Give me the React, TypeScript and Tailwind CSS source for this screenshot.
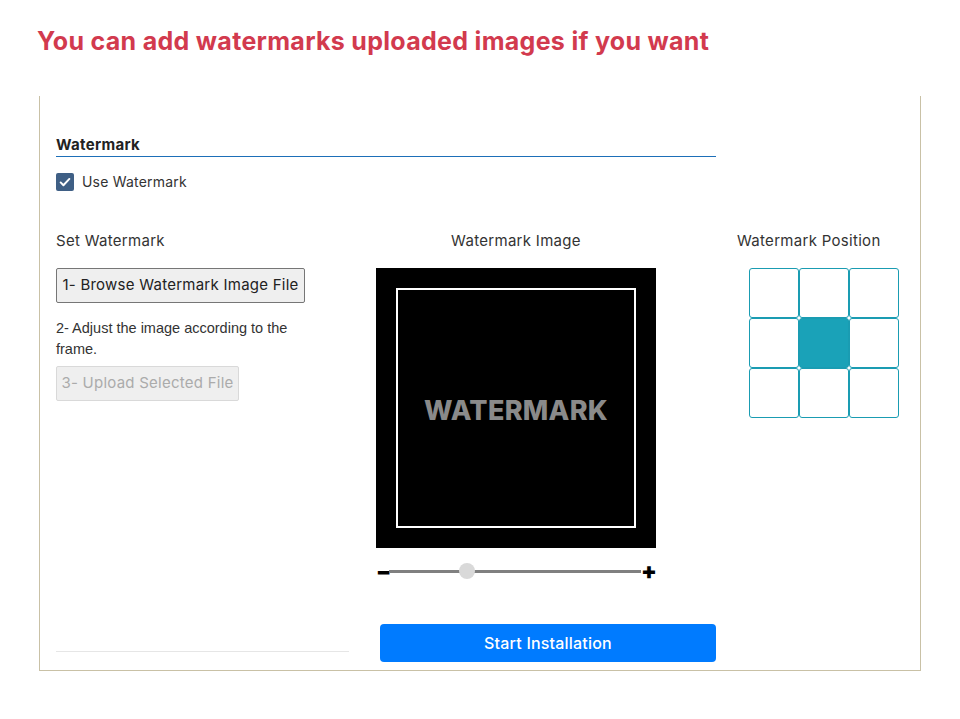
const positions = [0, 1, 2, 3, 4, 5, 6, 7, 8];

function CheckIcon() {
    return (
        <svg viewBox="0 0 16 16" className="h-[14px] w-[14px]" fill="none">
            <path d="M3 8.5l3.2 3.2L13 4.5" stroke="white" strokeWidth="2.2" strokeLinecap="round" strokeLinejoin="round" />
        </svg>
    );
}

function ZoomSlider({ value }: { value: number }) {
    return (
        <div className="mt-[13px] flex h-5 w-[280px] items-center">
            <span className="w-[13px] text-[22px] leading-none font-black text-black">−</span>
            <div className="relative h-[3px] flex-1 bg-[#808080]">
                <div
                    className="absolute top-1/2 h-4 w-4 -translate-x-1/2 -translate-y-1/2 rounded-full bg-[#d9d9d9]"
                    style={{ left: `${value}%` }}
                />
            </div>
            <span className="w-[15px] text-right text-[23px] leading-none font-black text-black">+</span>
        </div>
    );
}

export default function App() {
    const selected = 4;

    return (
        <div className="min-h-[719px] w-[960px] bg-white pt-[25px] font-['Inter',sans-serif] text-[#333]">
            <h1 className="ml-[37px] text-[25px] leading-8 font-bold tracking-[0.3px] text-[#d23a4e]">
                You can add watermarks uploaded images if you want
            </h1>

            <div className="mt-[39px] ml-[39px] w-[882px] border-x border-b border-[#c9c1a6] pt-[39px] pb-2 pl-4">
                <div className="w-[660px] border-b border-[#1d6fb8] pb-px">
                    <p className="text-[15px] leading-5 font-bold tracking-[0.3px] text-[#222]">Watermark</p>
                </div>

                <label className="mt-4 flex items-center gap-2">
                    <span className="flex h-[18px] w-[18px] items-center justify-center rounded-[2px] bg-[#3f5f85]">
                        <CheckIcon />
                    </span>
                    <span className="text-[14px] leading-[18px] tracking-[0.2px] text-[#333]">Use Watermark</span>
                </label>

                <div className="mt-[40px] flex">
                    <div className="w-[320px]">
                        <p className="text-[15px] leading-5 tracking-[0.3px] text-[#333]">Set Watermark</p>
                        <button className="mt-[17px] h-[35px] w-[249px] rounded-[2px] border border-[#767676] bg-[#efefef] text-center text-[15px] tracking-[0.25px] text-[#222]">
                            1- Browse Watermark Image File
                        </button>
                        <p className="mt-[15px] w-[250px] font-['Liberation_Sans',Arial,sans-serif] text-[14.5px] leading-[21px] text-[#333]">
                            2- Adjust the image according to the frame.
                        </p>
                        <button
                            disabled
                            className="mt-[6px] h-[35px] w-[183px] rounded-[2px] border border-[#d9d9d9] bg-[#efefef] text-center text-[15px] tracking-[0.25px] text-[#ababab]"
                        >
                            3- Upload Selected File
                        </button>
                    </div>

                    <div className="w-[280px]">
                        <p className="text-center text-[15px] leading-5 tracking-[0.3px] text-[#333]">Watermark Image</p>
                        <div className="mt-[17px] h-[280px] w-[280px] bg-black p-5">
                            <div className="flex h-full w-full items-center justify-center border-2 border-white">
                                <span className="mt-[6px] text-[27px] font-extrabold tracking-[0.3px] text-[#8a8a8a]">WATERMARK</span>
                            </div>
                        </div>
                        <ZoomSlider value={31} />
                    </div>

                    <div className="ml-[81px]">
                        <p className="text-[15px] leading-5 tracking-[0.3px] text-[#333]">Watermark Position</p>
                        <div className="mt-[17px] ml-3 grid grid-cols-[repeat(3,50px)]">
                            {positions.map((p) => (
                                <div
                                    key={p}
                                    className={
                                        p === selected
                                            ? 'h-[50px] rounded-[3px] border-[1.5px] border-[#1a9cb2] bg-[#1aa2b8]'
                                            : 'h-[50px] rounded-[3px] border-[1.5px] border-[#1a9cb2] bg-white'
                                    }
                                />
                            ))}
                        </div>
                    </div>
                </div>

                <div className="mt-[43px] flex items-start">
                    <div className="mt-[27px] w-[293px] border-t border-[#e6e6e6]" />
                    <button className="ml-[31px] h-[38px] w-[336px] rounded-[4px] bg-[#007bff] text-[16px] font-medium tracking-[0.2px] text-white">
                        Start Installation
                    </button>
                </div>
            </div>
        </div>
    );
}
